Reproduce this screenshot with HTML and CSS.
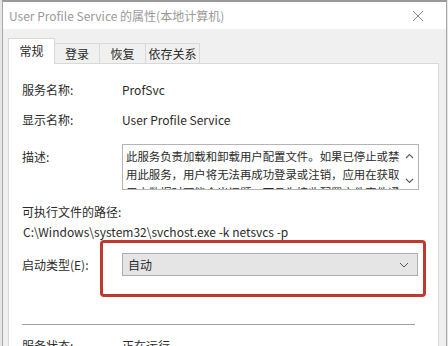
FILE: index.html
```html
<!DOCTYPE html>
<html lang="zh-CN">
<head>
  <meta charset="UTF-8">
  <title>User Profile Service 的属性</title>
  <link rel="stylesheet" href="styles.css">
</head>
<body>
  <div class="window">
    <!-- Title bar -->
    <div class="titlebar">
      <span class="title">User Profile Service 的属性(本地计算机)</span>
      <svg class="close" width="12" height="12" viewBox="0 0 12 12">
        <path d="M1 1 L11 11 M11 1 L1 11" stroke="#8a8a8a" stroke-width="1" fill="none"/>
      </svg>
    </div>

    <!-- Tabs -->
    <div class="tabbar">
      <div class="tab active">常规</div>
      <div class="tab">登录</div>
      <div class="tab">恢复</div>
      <div class="tab">依存关系</div>
    </div>

    <!-- Panel -->
    <div class="panel">
      <div class="row row-first">
        <span class="label">服务名称:</span>
        <span class="value">ProfSvc</span>
      </div>
      <div class="row row-second">
        <span class="label">显示名称:</span>
        <span class="value">User Profile Service</span>
      </div>
      <div class="row row-desc">
        <span class="label">描述:</span>
        <div class="desc">
          <div class="desc-text">此服务负责加载和卸载用户配置文件。如果已停止或禁<br>用此服务，用户将无法再成功登录或注销，应用在获取<br>用户数据时可能会出问题，而且为接收配置文件事件通</div>
          <div class="desc-scroll">
            <svg width="9" height="6" viewBox="0 0 9 6"><path d="M1 5 L4.5 1.5 L8 5" stroke="#606060" stroke-width="1.2" fill="none"/></svg>
            <svg width="9" height="6" viewBox="0 0 9 6"><path d="M1 1 L4.5 4.5 L8 1" stroke="#606060" stroke-width="1.2" fill="none"/></svg>
          </div>
        </div>
      </div>
      <div class="path-label">可执行文件的路径:</div>
      <div class="path">C:\Windows\system32\svchost.exe -k netsvcs -p</div>
      <div class="row row-start">
        <span class="label">启动类型(E):</span>
        <div class="select-wrap">
          <div class="select">
            <span>自动</span>
            <svg width="10" height="6" viewBox="0 0 10 6"><path d="M1 1 L5 5 L9 1" stroke="#555" stroke-width="1" fill="none"/></svg>
          </div>
          <div class="highlight"></div>
        </div>
      </div>
      <div class="separator"></div>
      <div class="row row-status">
        <span class="label">服务状态:</span>
        <span class="value">正在运行</span>
      </div>
    </div>
  </div>
</body>
</html>
```

FILE: styles.css
```css
* {
  box-sizing: border-box;
}

body {
  margin: 0;
  background: #e6e6e6;
  font-family: 'Noto Sans CJK SC', sans-serif;
  font-size: 12px;
  color: #2b2b2b;
  overflow: hidden;
}

.window {
  margin-left: 2px;
  width: 445px;
  height: 346px;
  background: #f0f0f0;
  border-top: 2px solid #9a9a9a;
  border-left: 1px solid #a8a8a8;
  border-right: 1px solid #a8a8a8;
  overflow: hidden;
}

.titlebar {
  height: 27px;
  background: #fff;
  display: flex;
  align-items: center;
  justify-content: space-between;
  padding: 0 22px 0 6px;
}

.title {
  color: #9a9a9a;
  font-size: 12px;
}

.tabbar {
  display: flex;
  align-items: flex-end;
  padding: 8px 0 0 5px;
  height: 34px;
}

.tab {
  height: 20px;
  border: 1px solid #d9d9d9;
  border-bottom: none;
  border-left: none;
  background: #f0f0f0;
  display: flex;
  align-items: center;
  justify-content: center;
  white-space: nowrap;
}

.tab:nth-child(2) { width: 45px; }
.tab:nth-child(3) { width: 46px; }
.tab:nth-child(4) { width: 54px; }

.tab.active {
  width: 47px;
  height: 26px;
  background: #fff;
  border-left: 1px solid #d9d9d9;
  margin-bottom: -1px;
  position: relative;
  z-index: 1;
  padding-bottom: 2px;
}

.panel {
  margin: 0 7px 0 5px;
  height: 300px;
  background: #fff;
  border: 1px solid #d9d9d9;
  padding: 15px 0 0 13px;
}

.row {
  display: flex;
  align-items: center;
}

.label {
  width: 100px;
  flex: none;
}

.row-first,
.row-second,
.row-status {
  height: 20px;
}

.row-second {
  margin-top: 10px;
}

.row-desc {
  margin-top: 15px;
  align-items: flex-start;
}

.row-desc .label {
  margin-top: 4px;
}

.desc {
  width: 297px;
  height: 46px;
  border: 1px solid #b4b4b4;
  display: flex;
  overflow: hidden;
}

.desc-text {
  flex: 1;
  padding: 2px 0 0 3px;
  font-size: 11.4px;
  line-height: 18px;
  white-space: nowrap;
  overflow: hidden;
}

.desc-scroll {
  width: 17px;
  display: flex;
  flex-direction: column;
  justify-content: space-between;
  align-items: center;
  padding: 8px 0 5px;
}

.path-label {
  margin-top: 12px;
  height: 20px;
  line-height: 20px;
}

.path {
  height: 20px;
  line-height: 20px;
  padding-left: 1px;
}

.row-start {
  margin-top: 11px;
}

.select-wrap {
  position: relative;
}

.select {
  width: 296px;
  height: 23px;
  background: #e5e5e5;
  border: 1px solid #adadad;
  display: flex;
  align-items: center;
  justify-content: space-between;
  padding: 0 8px 0 5px;
}

.highlight {
  position: absolute;
  top: -13px;
  left: -22px;
  right: -8px;
  bottom: -21px;
  border: 3px solid #c0392f;
  border-radius: 4px;
}

.separator {
  margin: 48px 0 0 0;
  width: 393px;
  height: 1px;
  background: #a0a0a0;
}

.row-status {
  margin-top: 10px;
}
```
